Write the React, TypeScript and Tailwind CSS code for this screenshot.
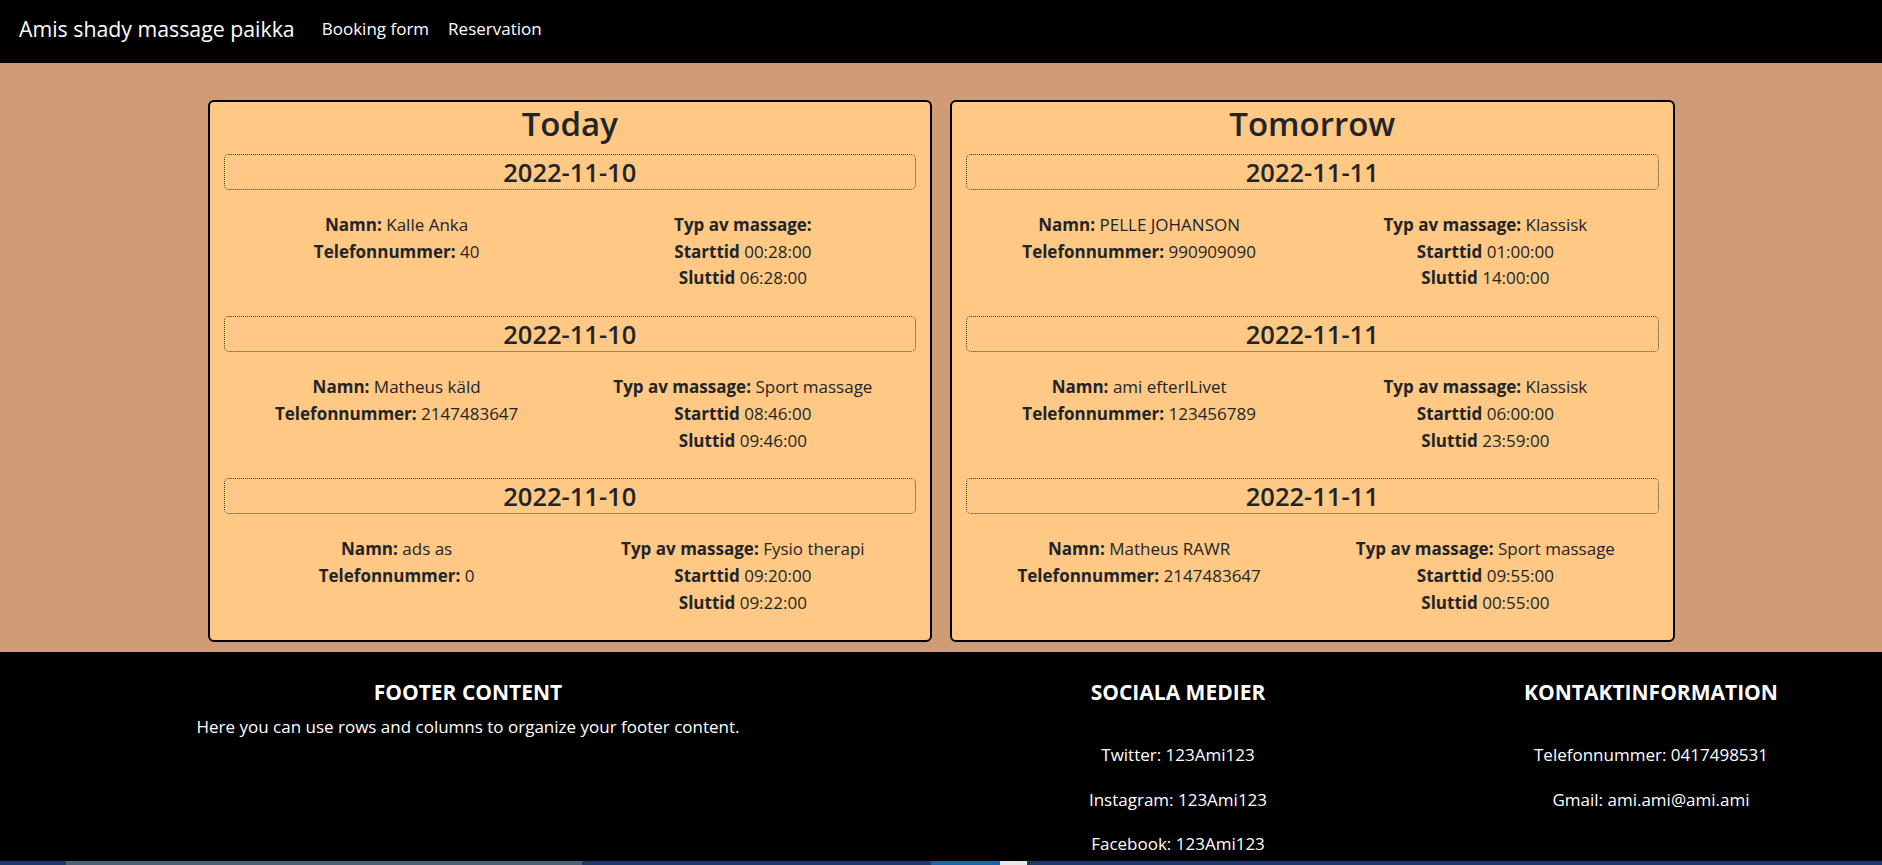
import React from "react";

type Booking = {
  date: string;
  name: string;
  tel: string;
  typ: string;
  start: string;
  end: string;
};

const today: Booking[] = [
  { date: "2022-11-10", name: "Kalle Anka", tel: "40", typ: "", start: "00:28:00", end: "06:28:00" },
  { date: "2022-11-10", name: "Matheus käld", tel: "2147483647", typ: "Sport massage", start: "08:46:00", end: "09:46:00" },
  { date: "2022-11-10", name: "ads as", tel: "0", typ: "Fysio therapi", start: "09:20:00", end: "09:22:00" },
];

const tomorrow: Booking[] = [
  { date: "2022-11-11", name: "PELLE JOHANSON", tel: "990909090", typ: "Klassisk", start: "01:00:00", end: "14:00:00" },
  { date: "2022-11-11", name: "ami efterILivet", tel: "123456789", typ: "Klassisk", start: "06:00:00", end: "23:59:00" },
  { date: "2022-11-11", name: "Matheus RAWR", tel: "2147483647", typ: "Sport massage", start: "09:55:00", end: "00:55:00" },
];

function Entry({ b }: { b: Booking }) {
  return (
    <div>
      <div className="border border-dotted border-[#3a3a3a] rounded-[5px] h-[36px] flex items-center justify-center">
        <h3 className="text-[25.5px] leading-[34px] font-semibold text-[#212529]">{b.date}</h3>
      </div>
      <div className="grid grid-cols-2 pt-[22px] pb-[24px] text-[17px] leading-[26.7px] text-[#212529] text-center">
        <div>
          <div>
            <span className="font-bold">Namn:</span> {b.name}
          </div>
          <div>
            <span className="font-bold">Telefonnummer:</span> {b.tel}
          </div>
        </div>
        <div>
          <div>
            <span className="font-bold">Typ av massage:</span> {b.typ}
          </div>
          <div>
            <span className="font-bold">Starttid</span> {b.start}
          </div>
          <div>
            <span className="font-bold">Sluttid</span> {b.end}
          </div>
        </div>
      </div>
    </div>
  );
}

function Card({ title, items }: { title: string; items: Booking[] }) {
  return (
    <div className="flex-1 border-2 border-black rounded-[6px] bg-[#ffc985] px-[14px]">
      <h2 className="pt-[1px] mb-[9px] text-[33px] leading-[42px] font-semibold text-center text-[#212529]">{title}</h2>
      {items.map((b, i) => (
        <Entry key={i} b={b} />
      ))}
    </div>
  );
}

export default function App() {
  return (
    <div className="h-[865px] w-full overflow-hidden flex flex-col font-['Open_Sans',sans-serif] bg-black">
      <nav className="h-[63px] shrink-0 bg-black flex items-start pt-[14px] pl-[19px] text-white">
        <span className="text-[21.3px] leading-[30px]">Amis shady massage paikka</span>
        <a className="ml-[27px] text-[17px] leading-[30px]">Booking form</a>
        <a className="ml-[19px] text-[17px] leading-[30px]">Reservation</a>
      </nav>
      <main className="shrink-0 bg-[#cf9c75] pt-[37px] pb-[10px]">
        <div className="mx-auto w-[1467px] flex gap-[18px]">
          <Card title="Today" items={today} />
          <Card title="Tomorrow" items={tomorrow} />
        </div>
      </main>
      <footer className="flex-1 overflow-hidden bg-black text-white pt-[28px] grid grid-cols-[936px_484px_1fr] text-center">
        <div>
          <h5 className="text-[21px] leading-[24px] font-bold uppercase">Footer Content</h5>
          <p className="mt-[10px] text-[17px] leading-[26.7px]">
            Here you can use rows and columns to organize your footer content.
          </p>
        </div>
        <div>
          <h5 className="text-[21px] leading-[24px] font-bold uppercase">Sociala medier</h5>
          <ul className="mt-[38px] text-[17px] leading-[26.7px] flex flex-col gap-[17.7px]">
            <li>Twitter: 123Ami123</li>
            <li>Instagram: 123Ami123</li>
            <li>Facebook: 123Ami123</li>
          </ul>
        </div>
        <div>
          <h5 className="text-[21px] leading-[24px] font-bold uppercase">Kontaktinformation</h5>
          <ul className="mt-[38px] text-[17px] leading-[26.7px] flex flex-col gap-[17.7px]">
            <li>Telefonnummer: 0417498531</li>
            <li>Gmail: ami.ami@ami.ami</li>
          </ul>
        </div>
      </footer>
      <div className="h-[4px] shrink-0 flex">
        <div className="w-[66px] bg-[#1b3c6b]" />
        <div className="w-[516px] bg-[#4a6177]" />
        <div className="w-[349px] bg-[#1b3c6b]" />
        <div className="w-[69px] bg-[#1565b0]" />
        <div className="w-[27px] bg-[#e8e8e8]" />
        <div className="flex-1 bg-[#1b3c6b]" />
      </div>
    </div>
  );
}
